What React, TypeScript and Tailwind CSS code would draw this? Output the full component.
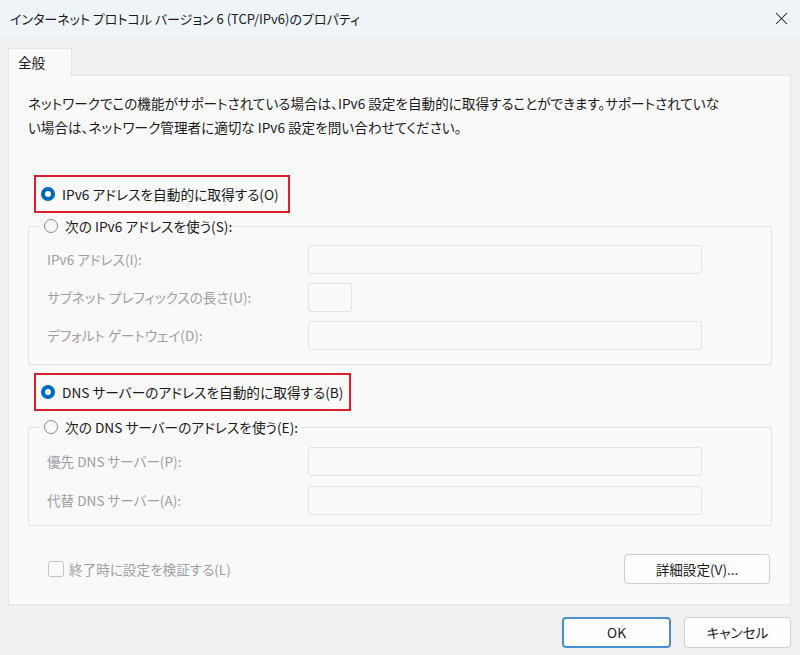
import { X } from 'lucide-react';

const font = "font-['Segoe_UI','Noto_Sans_CJK_JP',sans-serif] [font-feature-settings:'palt']";

function Radio({ checked, label, dim = false }: { checked?: boolean; label: string; dim?: boolean }) {
  return (
    <span className="flex items-center gap-[7px] bg-[#f9f9f9] h-[20px]">
      {checked ? (
        <span className="h-[14px] w-[14px] rounded-full bg-[#0067c0] flex items-center justify-center shrink-0">
          <span className="h-[6px] w-[6px] rounded-full bg-white" />
        </span>
      ) : (
        <span className="h-[14px] w-[14px] rounded-full border border-[#8a8a8a] bg-[#f9f9f9] shrink-0" />
      )}
      <span className={`text-[13.7px] whitespace-nowrap ${dim ? 'text-[#a0a0a0]' : 'text-[#1b1b1b]'}`}>{label}</span>
    </span>
  );
}

function FieldRow({ label, small = false }: { label: string; small?: boolean }) {
  return (
    <div className="flex items-center h-[29px]">
      <span className="w-[261px] text-[13.6px] text-[#a0a0a0] whitespace-nowrap">{label}</span>
      <div className={`h-[29px] ${small ? 'w-[44px]' : 'w-[394px]'} rounded-[3px] border border-[#e3e3e3] bg-[#f9f9f9]`} />
    </div>
  );
}

export default function App() {
  return (
    <div className={`w-[800px] h-[655px] bg-[#f0f0f0] flex flex-col overflow-hidden ${font}`}>
      {/* Title bar */}
      <div className="h-[37px] bg-[#eef4f8] flex items-center justify-between pl-[10px] pr-[8px] shrink-0">
        <span className="text-[13px] text-[#1b1b1b] whitespace-nowrap">インターネット プロトコル バージョン 6 (TCP/IPv6)のプロパティ</span>
        <X className="h-[21px] w-[21px] text-[#1b1b1b]" strokeWidth={1.2} />
      </div>

      <div className="px-[8px] pt-[11px] flex flex-col">
        {/* Tab */}
        <div className="w-[64px] h-[28px] bg-[#f9f9f9] border border-b-0 border-[#e5e5e5] flex items-center pl-[9px] text-[13.6px] text-[#1b1b1b] relative z-10 -mb-px">
          全般
        </div>

        {/* Panel */}
        <div className="h-[530px] w-[783px] bg-[#f9f9f9] border border-[#e5e5e5] flex flex-col pl-[19px]">
          <p className="mt-[15px] text-[13.6px] leading-[24px] text-[#1b1b1b] whitespace-nowrap">
            ネットワークでこの機能がサポートされている場合は、IPv6 設定を自動的に取得することができます。サポートされていな
            <br />
            い場合は、ネットワーク管理者に適切な IPv6 設定を問い合わせてください。
          </p>

          {/* IPv6 section */}
          <div className="mt-[36px] ml-[6px] w-[256px] h-[38px] border-2 border-[#d7202b] flex items-center pl-[5px]">
            <Radio checked label="IPv6 アドレスを自動的に取得する(O)" />
          </div>
          <fieldset className="mt-[3px] w-[744px] h-[149px] border border-[#e3e3e3] rounded-[2px] px-[18px] pb-[11px] flex flex-col gap-[9px]">
            <legend className="-ml-[7px] pl-[4px] pr-[2px] bg-[#f9f9f9]">
              <Radio label="次の IPv6 アドレスを使う(S):" />
            </legend>
            <div />
            <FieldRow label="IPv6 アドレス(I):" />
            <FieldRow label="サブネット プレフィックスの長さ(U):" small />
            <FieldRow label="デフォルト ゲートウェイ(D):" />
          </fieldset>

          {/* DNS section */}
          <div className="mt-[8px] ml-[6px] w-[317px] h-[38px] border-2 border-[#d7202b] flex items-center pl-[5px]">
            <Radio checked label="DNS サーバーのアドレスを自動的に取得する(B)" />
          </div>
          <fieldset className="mt-[6px] w-[744px] h-[109px] border border-[#e3e3e3] rounded-[2px] px-[18px] pb-[11px] flex flex-col gap-[10px]">
            <legend className="-ml-[7px] pl-[4px] pr-[2px] bg-[#f9f9f9]">
              <Radio label="次の DNS サーバーのアドレスを使う(E):" />
            </legend>
            <div />
            <FieldRow label="優先 DNS サーバー(P):" />
            <FieldRow label="代替 DNS サーバー(A):" />
          </fieldset>

          {/* Bottom row */}
          <div className="mt-[28px] flex items-center justify-between w-[742px]">
            <label className="flex items-center gap-[5px] ml-[20px]">
              <span className="h-[16px] w-[16px] rounded-[3px] border border-[#c4c4c4] bg-[#f9f9f9]" />
              <span className="text-[13.6px] text-[#a0a0a0]">終了時に設定を検証する(L)</span>
            </label>
            <button className="h-[30px] w-[146px] rounded-[4px] border border-[#d0d0d0] bg-[#fdfdfd] text-[13.6px] text-[#1b1b1b]">
              詳細設定(V)...
            </button>
          </div>
        </div>
      </div>

      {/* Dialog buttons */}
      <div className="flex justify-end gap-[13px] pr-[9px] mt-[12px]">
        <button className="h-[31px] w-[109px] rounded-[4px] border-2 border-[#4a8fd0] bg-[#fdfdfd] text-[13.6px] text-[#1b1b1b]">
          OK
        </button>
        <button className="h-[31px] w-[107px] rounded-[4px] border border-[#d0d0d0] bg-[#fdfdfd] text-[13.6px] text-[#1b1b1b]">
          キャンセル
        </button>
      </div>
    </div>
  );
}
